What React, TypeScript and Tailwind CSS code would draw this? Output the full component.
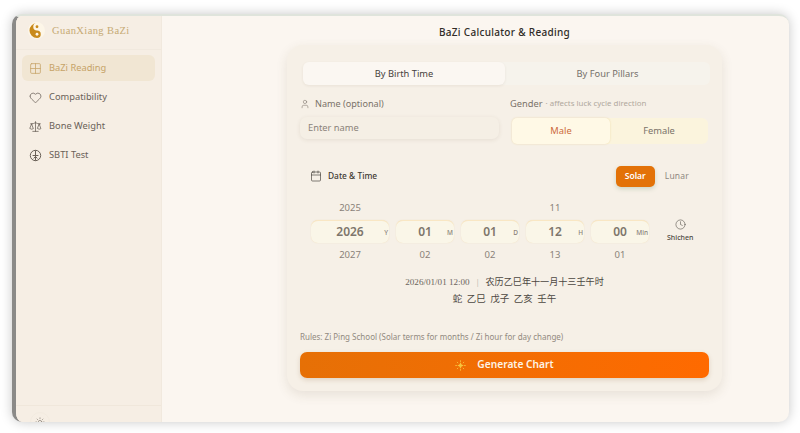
import { Calendar, Clock, Grid2x2, Heart, Scale, Sun, User } from "lucide-react";

const navItems = [
    { label: "BaZi Reading", icon: <Grid2x2 size={13} strokeWidth={1.4} />, active: true },
    { label: "Compatibility", icon: <Heart size={13} strokeWidth={1.4} />, active: false },
    { label: "Bone Weight", icon: <Scale size={13} strokeWidth={1.4} />, active: false },
    { label: "SBTI Test", icon: <SbtiIcon />, active: false },
];

const wheels = [
    { prev: "2025", value: "2026", next: "2027", unit: "Y", width: "w-[78px]" },
    { prev: "", value: "01", next: "02", unit: "M", width: "w-[58px]" },
    { prev: "", value: "01", next: "02", unit: "D", width: "w-[58px]" },
    { prev: "11", value: "12", next: "13", unit: "H", width: "w-[58px]" },
    { prev: "", value: "00", next: "01", unit: "Min", width: "w-[58px]" },
];

function SbtiIcon() {
    return (
        <svg width="13" height="13" viewBox="0 0 13 13" fill="none" stroke="currentColor" strokeWidth="1">
            <circle cx="6.5" cy="6.5" r="5.2" />
            <path d="M6.5 1.3V11.7M3.6 6.5H9.4M4.6 9.4L6.5 7.6L8.4 9.4" />
        </svg>
    );
}

function Logo() {
    return (
        <svg width="17" height="17" viewBox="0 0 34 34">
            <circle cx="17" cy="17" r="17" fill="#fdf6e8" />
            <path d="M18 2A15 15 0 0 0 18 32A7.5 7.5 0 0 0 18 17A7.5 7.5 0 0 1 18 2Z" fill="#c98a1b" />
            <circle cx="18" cy="9.5" r="2.8" fill="#c98a1b" />
            <circle cx="18" cy="24.5" r="2.8" fill="#fdf6e8" />
        </svg>
    );
}

function Spark() {
    return (
        <svg width="11" height="11" viewBox="0 0 13 13" fill="#f7c53e" stroke="#f7c53e" strokeWidth="1" strokeLinecap="round">
            <path d="M6.5 2.6L7.8 5.3L10.4 6.5L7.8 7.7L6.5 10.4L5.2 7.7L2.6 6.5L5.2 5.3Z" stroke="none" />
            <path d="M6.5 .8V1.8M6.5 11.2V12.2M.8 6.5H1.8M11.2 6.5H12.2M2.6 2.6L3.4 3.4M10.4 2.6L9.6 3.4M2.6 10.4L3.4 9.6M10.4 10.4L9.6 9.6" />
        </svg>
    );
}

export default function App() {
    return (
        <div className="w-[800px] h-[433px] overflow-hidden bg-white pt-[14px] pl-[12px] pr-[11px] pb-[11px] font-['Noto_Sans',sans-serif]">
            <div className="h-full flex rounded-[10px] overflow-hidden border-t-[2px] border-t-[#dfe4dc] border-l-[4px] border-l-[#8b8a88] bg-[#fbf6f0] shadow-[0_0_12px_rgba(0,0,0,0.22)]">
                <aside className="w-[146px] shrink-0 flex flex-col bg-[#f6eee4] border-r border-[#f1e9de]">
                    <div className="h-[34px] shrink-0 flex items-center gap-[7px] pl-[12px] pb-[4px] border-b border-[#f1e9de]">
                        <Logo />
                        <span className="font-['Liberation_Serif',serif] text-[10.5px] tracking-[0.4px] text-[#c6aa74]">GuanXiang BaZi</span>
                    </div>
                    <nav className="flex-1 flex flex-col gap-[3px] px-[6px] pt-[5px]">
                        {navItems.map((item) => (
                            <div
                                key={item.label}
                                className={`h-[26px] flex items-center gap-[7px] px-[7px] rounded-[6px] text-[9.3px] ${item.active ? "bg-[#f1e6d3] text-[#c6a367]" : "text-[#6a6158]"}`}
                            >
                                {item.icon}
                                <span>{item.label}</span>
                            </div>
                        ))}
                    </nav>
                    <div className="h-[17px] shrink-0 overflow-hidden pl-[14px] pt-[6px] border-t border-[#f0e7db] text-[#777067]">
                        <div className="w-[20px] h-[20px] flex items-center justify-center rounded-full border border-[#f2eadf]">
                            <Sun size={10} strokeWidth={1.4} />
                        </div>
                    </div>
                </aside>

                <main className="flex-1 flex flex-col items-center pt-[6px] pl-[58px]">
                    <h1 className="h-[21px] flex items-center text-[10px] font-medium tracking-[0.3px] text-[#2f2b27]">BaZi Calculator &amp; Reading</h1>
                    <div className="w-[435px] h-[346px] mt-[2px] rounded-[16px] bg-[#f6f0e7] shadow-[0_4px_12px_rgba(90,70,40,0.12)] px-[13px] pt-[17px]">
                        <div className="h-[23px] ml-[3px] mr-[-1px] flex rounded-[6px] bg-[#f6f3ec] text-[9.3px] text-[#75706a]">
                            <div className="w-[202px] flex items-center justify-center rounded-[6px] bg-[#fbf7f2] text-[#46413b] shadow-[0_1px_3px_rgba(90,70,40,0.08)]">By Birth Time</div>
                            <div className="flex-1 flex items-center justify-center">By Four Pillars</div>
                        </div>

                        <div className="flex mt-[12px]">
                            <div className="w-[210px]">
                                <div className="h-[14px] flex items-center gap-[5px] text-[9.1px] text-[#7a7269]">
                                    <User size={10} strokeWidth={1.3} />
                                    <span>Name (optional)</span>
                                </div>
                                <div className="mt-[6px] w-[199px] h-[22px] flex items-center px-[8px] rounded-[7px] bg-[#f5efe5] shadow-[0_1px_4px_rgba(90,70,40,0.1)] text-[9.3px] text-[#8a8279]">Enter name</div>
                            </div>
                            <div className="flex-1">
                                <div className="h-[14px] flex items-center gap-[3px] text-[9.3px] text-[#7a7269]">
                                    <span>Gender</span>
                                    <span className="text-[7.9px] text-[#b0a89d]">· affects luck cycle direction</span>
                                </div>
                                <div className="mt-[7px] ml-[2px] w-[196px] h-[26px] flex rounded-[6px] bg-[#fbf4dd] text-[9.3px]">
                                    <div className="w-[98px] flex items-center justify-center rounded-[5px] bg-[#fff9e6] text-[#cc6a3c] shadow-[0_0_2px_rgba(225,185,90,0.4)]">Male</div>
                                    <div className="flex-1 flex items-center justify-center text-[#7a7269]">Female</div>
                                </div>
                            </div>
                        </div>

                        <div className="flex items-center justify-between h-[21px] mt-[22px] pl-[10px] pr-[20px]">
                            <div className="flex items-center gap-[6px] text-[#3f3a34]">
                                <Calendar size={12} strokeWidth={1.3} />
                                <span className="text-[8.4px] font-medium">Date &amp; Time</span>
                            </div>
                            <div className="flex items-center gap-[10px] text-[8.5px]">
                                <div className="w-[39px] h-[21px] flex items-center justify-center rounded-[5px] bg-[#e37208] font-semibold text-white shadow-[0_2px_4px_rgba(90,130,90,0.25)]">Solar</div>
                                <div className="text-[#8f887f] tracking-[0.2px]">Lunar</div>
                            </div>
                        </div>

                        <div className="flex items-start mt-[14px] pl-[11px]">
                            <div className="flex gap-[7px]">
                                {wheels.map((wheel) => (
                                    <div key={wheel.unit} className={`${wheel.width} flex flex-col items-center`}>
                                        <div className="h-[15px] flex items-center text-[9.5px] text-[#8a8279]">{wheel.prev}</div>
                                        <div className="relative w-full h-[23px] mt-[4px] flex items-center justify-center rounded-[7px] bg-[#faf6e8] border-t border-[#f9e7c4] shadow-[0_0_1px_rgba(235,200,130,0.5)] text-[12px] font-semibold text-[#7e766c]">
                                            {wheel.value}
                                            <span className="absolute right-[1px] top-[7px] text-[6.5px] font-medium text-[#8a8279]">{wheel.unit}</span>
                                        </div>
                                        <div className="h-[15px] mt-[5px] flex items-center text-[9.5px] text-[#8a8279]">{wheel.next}</div>
                                    </div>
                                ))}
                            </div>
                            <div className="ml-[18px] mt-[18px] flex flex-col items-center gap-[3px] text-[#4c4741]">
                                <Clock size={11} strokeWidth={1.2} />
                                <span className="text-[7px] font-medium">Shichen</span>
                            </div>
                        </div>

                        <div className="mt-[12px] flex flex-col items-center font-['Liberation_Serif','Noto_Sans_CJK_SC',serif] text-[#4c4741]">
                            <div className="h-[16px] flex items-center gap-[7px] text-[9.1px]">
                                <span className="text-[#6b645b]">2026/01/01 12:00</span>
                                <span className="text-[#b5aea4]">|</span>
                                <span>农历乙巳年十一月十三壬午时</span>
                            </div>
                            <div className="h-[16px] flex items-center gap-[4.5px] text-[9.5px] text-[#4c4741]">
                                <span>蛇</span><span>乙巳</span><span>戊子</span><span>乙亥</span><span>壬午</span>
                            </div>
                        </div>

                        <p className="mt-[23px] text-[8px] leading-[14px] text-[#928a80]">Rules: Zi Ping School (Solar terms for months / Zi hour for day change)</p>
                        <div className="mt-[8px] h-[26px] flex items-center justify-center gap-[11px] rounded-[7px] bg-gradient-to-r from-[#e67006] to-[#ff6a00] shadow-[0_2px_5px_rgba(120,80,30,0.18)] text-[10.2px] font-semibold text-[#fdf3e6]">
                            <Spark />
                            <span>Generate Chart</span>
                        </div>
                    </div>
                </main>
            </div>
        </div>
    );
}
